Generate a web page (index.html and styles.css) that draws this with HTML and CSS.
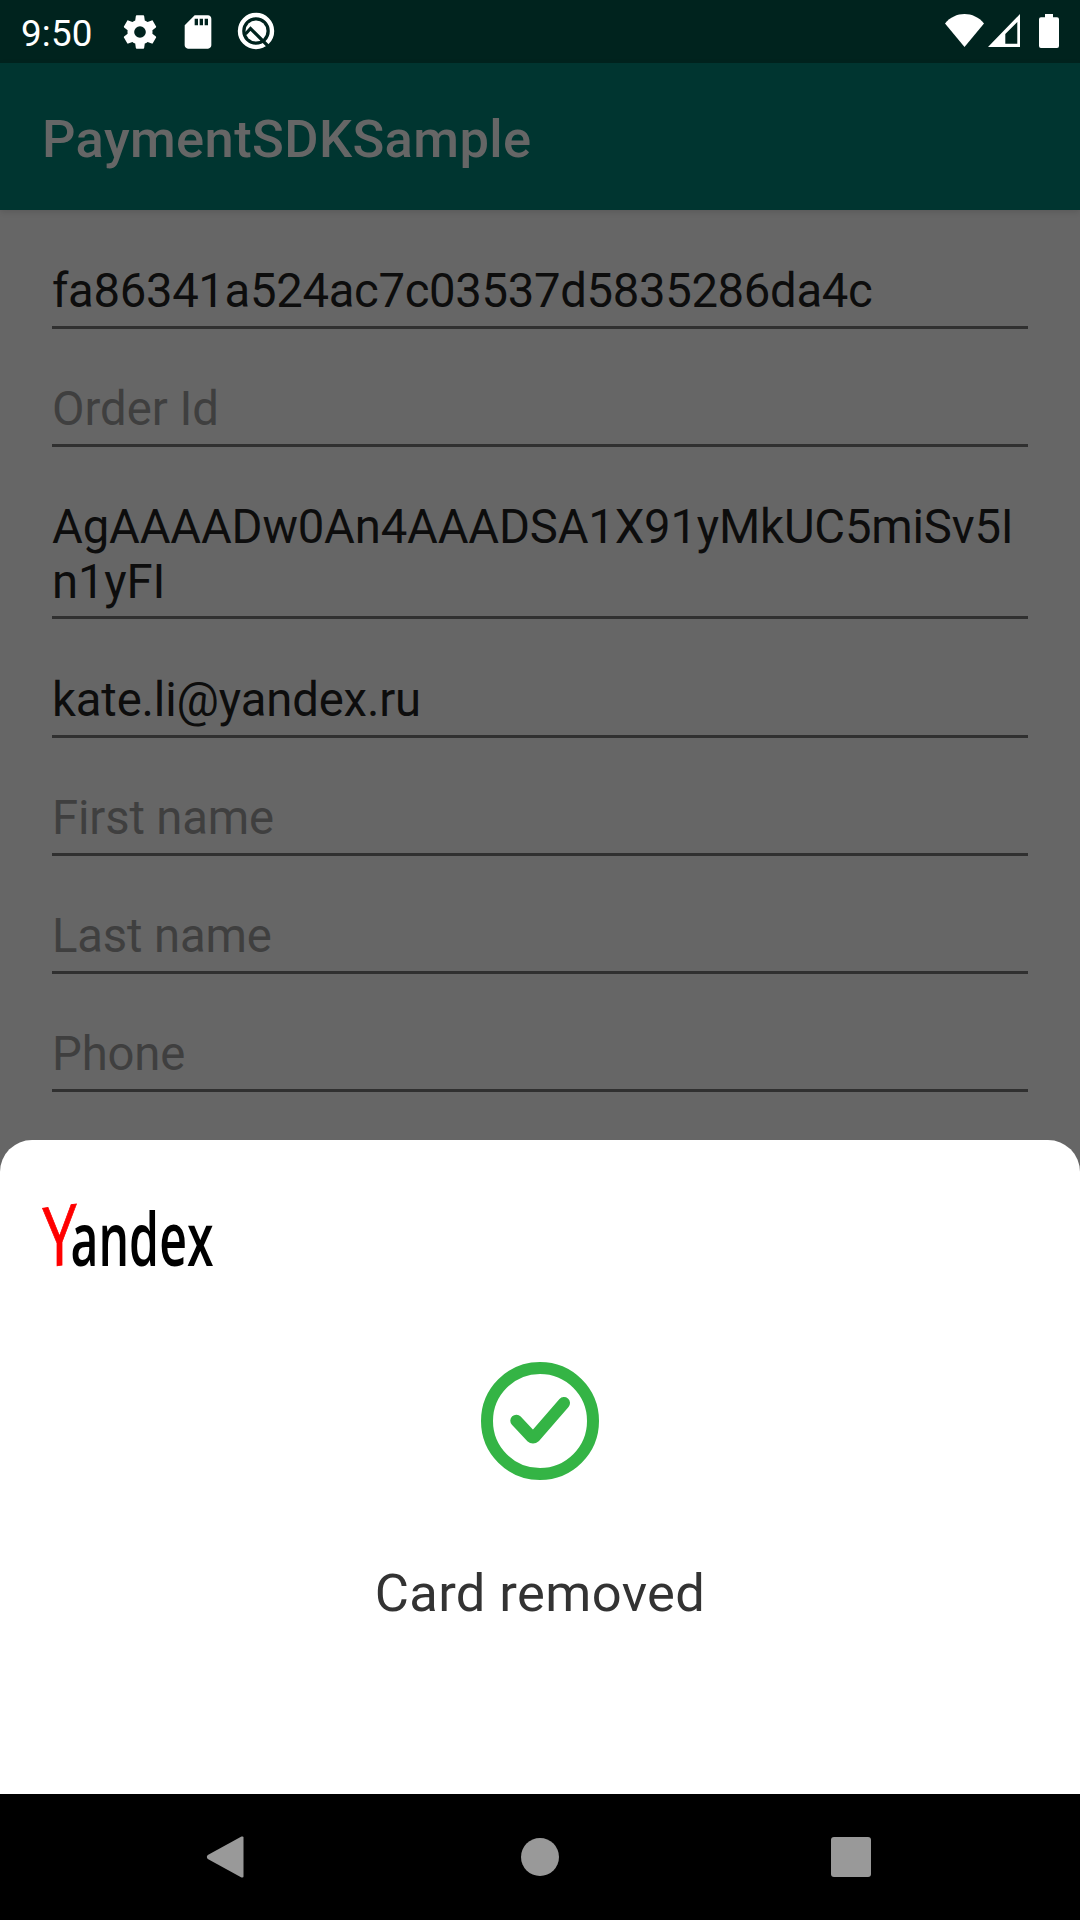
FILE: index.html
```html
<!DOCTYPE html>
<html lang="en">
<head>
<meta charset="utf-8">
<title>PaymentSDKSample</title>
<link rel="stylesheet" href="styles.css">
</head>
<body>
<div class="screen">
  <header class="status-bar">
    <span class="clock">9:50</span>
    <div class="notifications">
      <svg class="status-icon" viewBox="0 0 24 24"><path d="M19.43 12.98c.04-.32.07-.64.07-.98s-.03-.66-.07-.98l2.11-1.65c.19-.15.24-.42.12-.64l-2-3.46c-.12-.22-.39-.3-.61-.22l-2.49 1c-.52-.4-1.08-.73-1.69-.98l-.38-2.65A.49.49 0 0 0 14 2h-4c-.25 0-.46.18-.49.42l-.38 2.65c-.61.25-1.17.59-1.69.98l-2.49-1c-.23-.09-.49 0-.61.22l-2 3.46c-.13.22-.07.49.12.64l2.11 1.65c-.04.32-.07.65-.07.98s.03.66.07.98l-2.11 1.65c-.19.15-.24.42-.12.64l2 3.46c.12.22.39.3.61.22l2.49-1c.52.4 1.08.73 1.69.98l.38 2.65c.03.24.24.42.49.42h4c.25 0 .46-.18.49-.42l.38-2.65c.61-.25 1.17-.59 1.69-.98l2.49 1c.23.09.49 0 .61-.22l2-3.46c.12-.22.07-.49-.12-.64l-2.11-1.65zM12 15.5a3.5 3.5 0 1 1 0-7 3.5 3.5 0 0 1 0 7z"/></svg>
      <svg class="status-icon" viewBox="0 0 24 24"><path d="M18 2h-8L4.020 8 4 20c0 1.100.9 2 2 2h12c1.100 0 2-.9 2-2V4c0-1.100-.9-2-2-2zm-6 6h-2V4h2v4zm3 0h-2V4h2v4zm3 0h-2V4h2v4z"/></svg>
      <svg class="status-icon" viewBox="0 0 40 40">
        <circle cx="20" cy="19" r="16" fill="none" stroke="#fff" stroke-width="4.400"/>
        <circle cx="20" cy="19" r="10.500"/>
        <path d="M9.500 22l5-5.500L35 37" fill="none" stroke="#00231e" stroke-width="3.200"/>
      </svg>
    </div>
    <div class="system-icons">
      <svg class="wifi" viewBox="0 0 39 33"><path d="M0 9.500C10-3.200 29-3.200 39 9.500L19.500 33z"/></svg>
      <svg class="signal" viewBox="0 0 32 33"><path fill-rule="evenodd" d="M32 0v33H0zM29.300 8L17.300 20v9.700h12z"/></svg>
      <svg class="battery" viewBox="0 0 20 34"><path d="M6 0h8v3.300h4a2 2 0 0 1 2 2V32a2 2 0 0 1-2 2H2a2 2 0 0 1-2-2V5.300a2 2 0 0 1 2-2h4z"/></svg>
    </div>
  </header>

  <div class="app-bar"><h1 class="app-title">PaymentSDKSample</h1></div>

  <main class="form">
    <div class="field client-id">fa86341a524ac7c03537d5835286da4c</div>
    <div class="field hint order">Order Id</div>
    <div class="field multiline">AgAAAADw0An4AAADSA1X91yMkUC5miSv5I<br>n1yFI</div>
    <div class="field">kate.li@yandex.ru</div>
    <div class="field hint">First name</div>
    <div class="field hint">Last name</div>
    <div class="field hint">Phone</div>
  </main>

  <section class="sheet">
    <svg class="logo" viewBox="0 0 180 100">
      <text class="logo-y" transform="translate(.5 87.500) skewY(-7)" x="0" y="2.100" textLength="34" lengthAdjust="spacingAndGlyphs">Y</text>
      <text class="logo-rest" x="28.500" y="87.500" textLength="143" lengthAdjust="spacingAndGlyphs">andex</text>
    </svg>
    <svg class="check" viewBox="0 0 118 118">
      <circle cx="59" cy="59" r="53"/>
      <path d="M35.300 58.700l15 16q1.700 1.500 3.400 0L83 41"/>
    </svg>
    <p class="message">Card removed</p>
  </section>

  <nav class="nav-bar">
    <svg class="nav-icon" viewBox="0 0 44 44"><path d="M36.500 2.500v39q0 1.500-2 .9L.8 24q-1.900-2 0-4L34.500 1.600q2-.6 2 .9z"/></svg>
    <svg class="nav-icon" viewBox="0 0 44 44"><circle cx="22" cy="22" r="19"/></svg>
    <svg class="nav-icon" viewBox="0 0 44 44"><rect x="2" y="2" width="40" height="40" rx="3"/></svg>
  </nav>
</div>
</body>
</html>
```
FILE: styles.css
```css
* { box-sizing: border-box; }

body {
  margin: 0;
  background: #666;
  font-family: Roboto, "Liberation Sans", sans-serif;
}

svg { display: block; fill: #fff; flex: none; overflow: visible; }

.screen {
  display: flex;
  flex-direction: column;
  width: 1080px;
  height: 1920px;
  overflow: hidden;
}

.status-bar {
  display: flex;
  align-items: flex-start;
  height: 63px;
  flex: none;
  padding: 0 21px;
  background: #00231e;
}

.clock {
  width: 99px;
  padding-top: 12px;
  color: #fff;
  font-size: 36.75px;
  letter-spacing: .2px;
  line-height: 43px;
}

.notifications { display: flex; gap: 18px; padding-top: 12px; }
.status-icon { width: 40px; height: 40px; }

.system-icons { display: flex; margin-left: auto; padding-top: 14px; }
.wifi { width: 39px; height: 33px; }
.signal { width: 32px; height: 33px; margin-left: 4px; }
.battery { width: 20px; height: 34px; margin-left: 19px; }

.app-bar {
  display: flex;
  align-items: center;
  height: 147px;
  flex: none;
  padding: 4px 0 0 42px;
  background: #003530;
  box-shadow: 0 2px 6px rgba(0, 0, 0, .12);
}

.app-title {
  margin: 0;
  color: #666;
  font-size: 52.5px;
  font-weight: 500;
  letter-spacing: .38px;
  line-height: 62px;
}

.form {
  display: flex;
  flex-direction: column;
  height: 930px;
  flex: none;
  padding: 1px 52px 0;
}

.field {
  height: 118px;
  flex: none;
  padding-top: 53px;
  border-bottom: 3px solid #303030;
  color: #0d0d0d;
  font-size: 47.25px;
  letter-spacing: -.15px;
  line-height: 55px;
  white-space: nowrap;
}

.field.client-id { letter-spacing: -.33px; }
.field.multiline { height: 172px; margin-bottom: 1px; letter-spacing: -.18px; }
.field.hint { color: #3f3f3f; }
.field.order { letter-spacing: 0; }

.sheet {
  display: flex;
  flex-direction: column;
  align-items: center;
  height: 654px;
  flex: none;
  padding-top: 38px;
  border-radius: 32px 32px 0 0;
  background: #fff;
}

.logo {
  width: 180px;
  height: 100px;
  margin-left: 42px;
  align-self: flex-start;
  font-family: "Open Sans", "Noto Sans", sans-serif;
}

.logo-y { fill: #f00; stroke: #f00; stroke-width: .9px; font-size: 83px; }
.logo-rest { fill: #000; font-size: 75px; font-weight: 600; }

.check {
  width: 118px;
  height: 118px;
  margin-top: 84px;
  fill: none;
  stroke: #34b445;
  stroke-width: 12;
  stroke-linecap: round;
  stroke-linejoin: round;
}

.message {
  margin: 82px 0 0;
  color: #333;
  font-size: 52.5px;
  letter-spacing: .4px;
  line-height: 62px;
}

.nav-bar {
  display: flex;
  justify-content: space-between;
  align-items: center;
  height: 126px;
  flex: none;
  padding: 0 207px;
  background: #000;
}

.nav-icon { width: 44px; height: 44px; fill: #999; }
```
